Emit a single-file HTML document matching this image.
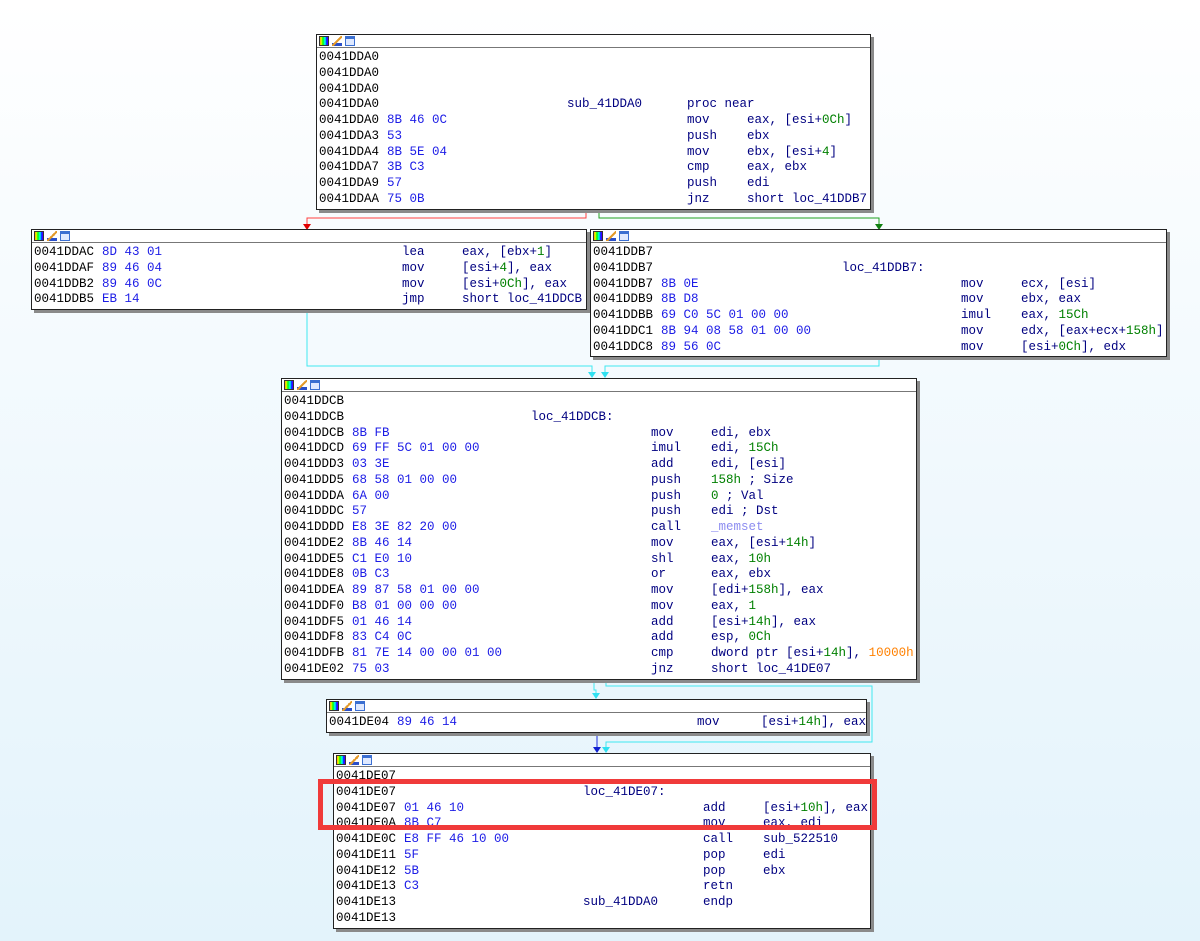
<!DOCTYPE html>
<html><head><meta charset="utf-8"><style>
body{margin:0;width:1200px;height:941px;overflow:hidden;background:linear-gradient(#ffffff 0%,#f6fbfe 30%,#e3f3fb 100%);font-family:"Liberation Mono",monospace;font-size:12.5px;position:relative}
.box{position:absolute;background:#fff;border:1px solid #222;box-shadow:3px 3px 0 #8a8a8a;padding-bottom:1px}
.hd{height:12px;border-bottom:1px solid #777;position:relative;margin-bottom:2px}
.hd i{position:absolute;top:1px;width:10px;height:10px}
.i1{left:2px;background:linear-gradient(90deg,#f00,#ff0,#0f0,#0ff,#00f,#f0f);outline:1px solid #333;outline-offset:-1px}
.i2{left:15px;background:linear-gradient(135deg,transparent 45%,#e39a2a 45%,#e39a2a 60%,transparent 60%),linear-gradient(0deg,#2a4fc9 30%,transparent 30%)}
.i3{left:28px;background:#dfe9ff;outline:1px solid #3b6fd1;outline-offset:-1px;box-shadow:inset 0 3px 0 #3b6fd1}
.l{position:relative;height:15.75px;line-height:15.75px;white-space:pre;color:#000}
.l span{position:absolute;top:0}
.a{left:2px}
.b{left:var(--b);color:#1c1ce6}
.lb{left:var(--l);color:#000080}
.m{left:var(--m);color:#000080}
.o{left:var(--o);color:#000080}
gg{color:#008000}k{color:#8c8cf0}r{color:#ff8000}
svg{position:absolute;left:0;top:0}
</style></head><body>
<svg width="1200" height="941">
<polyline fill="none" points="586,209 586,218 307,218 307,226" stroke="#ff4040"/>
<polyline fill="none" points="599,209 599,218 879,218 879,226" stroke="#20a020"/>
<polyline fill="none" points="307,311 307,366 592,366 592,374" stroke="#40e8f0"/>
<polyline fill="none" points="879,357 879,366 605,366 605,374" stroke="#40e8f0"/>
<polyline fill="none" points="594,680 594,690 596,690 596,696" stroke="#40e8f0"/>
<polyline fill="none" points="606,680 606,686 872,686 872,742 606,742 606,750" stroke="#40e8f0"/>
<polyline fill="none" points="597,735 597,750" stroke="#2030e0"/>
<polygon points="303,224 311,224 307,230" fill="#e00000"/>
<polygon points="875,224 883,224 879,230" fill="#108010"/>
<polygon points="588,372 596,372 592,378" fill="#30e0f0"/>
<polygon points="601,372 609,372 605,378" fill="#30e0f0"/>
<polygon points="592,693 600,693 596,699" fill="#30e0f0"/>
<polygon points="602,747 610,747 606,753" fill="#30e0f0"/>
<polygon points="593,747 601,747 597,753" fill="#1020d0"/>
</svg>

<div class="box" style="left:316px;top:34px;width:553px;--b:70px;--l:250px;--m:370px;--o:430px">
<div class="hd"><i class="i1"></i><i class="i2"></i><i class="i3"></i></div>
<div class="l"><span class="a">0041DDA0</span></div>
<div class="l"><span class="a">0041DDA0</span></div>
<div class="l"><span class="a">0041DDA0</span></div>
<div class="l"><span class="a">0041DDA0</span><span class="lb">sub_41DDA0</span><span class="m">proc near</span></div>
<div class="l"><span class="a">0041DDA0</span><span class="b">8B 46 0C</span><span class="m">mov</span><span class="o">eax, [esi+<gg>0Ch</gg>]</span></div>
<div class="l"><span class="a">0041DDA3</span><span class="b">53</span><span class="m">push</span><span class="o">ebx</span></div>
<div class="l"><span class="a">0041DDA4</span><span class="b">8B 5E 04</span><span class="m">mov</span><span class="o">ebx, [esi+<gg>4</gg>]</span></div>
<div class="l"><span class="a">0041DDA7</span><span class="b">3B C3</span><span class="m">cmp</span><span class="o">eax, ebx</span></div>
<div class="l"><span class="a">0041DDA9</span><span class="b">57</span><span class="m">push</span><span class="o">edi</span></div>
<div class="l"><span class="a">0041DDAA</span><span class="b">75 0B</span><span class="m">jnz</span><span class="o">short loc_41DDB7</span></div>
</div>

<div class="box" style="left:31px;top:229px;width:554px;--b:70px;--m:370px;--o:430px">
<div class="hd"><i class="i1"></i><i class="i2"></i><i class="i3"></i></div>
<div class="l"><span class="a">0041DDAC</span><span class="b">8D 43 01</span><span class="m">lea</span><span class="o">eax, [ebx+<gg>1</gg>]</span></div>
<div class="l"><span class="a">0041DDAF</span><span class="b">89 46 04</span><span class="m">mov</span><span class="o">[esi+<gg>4</gg>], eax</span></div>
<div class="l"><span class="a">0041DDB2</span><span class="b">89 46 0C</span><span class="m">mov</span><span class="o">[esi+<gg>0Ch</gg>], eax</span></div>
<div class="l"><span class="a">0041DDB5</span><span class="b">EB 14</span><span class="m">jmp</span><span class="o">short loc_41DDCB</span></div>
</div>

<div class="box" style="left:590px;top:229px;width:575px;--b:70px;--l:251px;--m:370px;--o:430px">
<div class="hd"><i class="i1"></i><i class="i2"></i><i class="i3"></i></div>
<div class="l"><span class="a">0041DDB7</span></div>
<div class="l"><span class="a">0041DDB7</span><span class="lb">loc_41DDB7:</span></div>
<div class="l"><span class="a">0041DDB7</span><span class="b">8B 0E</span><span class="m">mov</span><span class="o">ecx, [esi]</span></div>
<div class="l"><span class="a">0041DDB9</span><span class="b">8B D8</span><span class="m">mov</span><span class="o">ebx, eax</span></div>
<div class="l"><span class="a">0041DDBB</span><span class="b">69 C0 5C 01 00 00</span><span class="m">imul</span><span class="o">eax, <gg>15Ch</gg></span></div>
<div class="l"><span class="a">0041DDC1</span><span class="b">8B 94 08 58 01 00 00</span><span class="m">mov</span><span class="o">edx, [eax+ecx+<gg>158h</gg>]</span></div>
<div class="l"><span class="a">0041DDC8</span><span class="b">89 56 0C</span><span class="m">mov</span><span class="o">[esi+<gg>0Ch</gg>], edx</span></div>
</div>

<div class="box" style="left:281px;top:378px;width:634px;--b:70px;--l:249px;--m:369px;--o:429px">
<div class="hd"><i class="i1"></i><i class="i2"></i><i class="i3"></i></div>
<div class="l"><span class="a">0041DDCB</span></div>
<div class="l"><span class="a">0041DDCB</span><span class="lb">loc_41DDCB:</span></div>
<div class="l"><span class="a">0041DDCB</span><span class="b">8B FB</span><span class="m">mov</span><span class="o">edi, ebx</span></div>
<div class="l"><span class="a">0041DDCD</span><span class="b">69 FF 5C 01 00 00</span><span class="m">imul</span><span class="o">edi, <gg>15Ch</gg></span></div>
<div class="l"><span class="a">0041DDD3</span><span class="b">03 3E</span><span class="m">add</span><span class="o">edi, [esi]</span></div>
<div class="l"><span class="a">0041DDD5</span><span class="b">68 58 01 00 00</span><span class="m">push</span><span class="o"><gg>158h</gg> ; Size</span></div>
<div class="l"><span class="a">0041DDDA</span><span class="b">6A 00</span><span class="m">push</span><span class="o"><gg>0</gg> ; Val</span></div>
<div class="l"><span class="a">0041DDDC</span><span class="b">57</span><span class="m">push</span><span class="o">edi ; Dst</span></div>
<div class="l"><span class="a">0041DDDD</span><span class="b">E8 3E 82 20 00</span><span class="m">call</span><span class="o"><k>_memset</k></span></div>
<div class="l"><span class="a">0041DDE2</span><span class="b">8B 46 14</span><span class="m">mov</span><span class="o">eax, [esi+<gg>14h</gg>]</span></div>
<div class="l"><span class="a">0041DDE5</span><span class="b">C1 E0 10</span><span class="m">shl</span><span class="o">eax, <gg>10h</gg></span></div>
<div class="l"><span class="a">0041DDE8</span><span class="b">0B C3</span><span class="m">or</span><span class="o">eax, ebx</span></div>
<div class="l"><span class="a">0041DDEA</span><span class="b">89 87 58 01 00 00</span><span class="m">mov</span><span class="o">[edi+<gg>158h</gg>], eax</span></div>
<div class="l"><span class="a">0041DDF0</span><span class="b">B8 01 00 00 00</span><span class="m">mov</span><span class="o">eax, <gg>1</gg></span></div>
<div class="l"><span class="a">0041DDF5</span><span class="b">01 46 14</span><span class="m">add</span><span class="o">[esi+<gg>14h</gg>], eax</span></div>
<div class="l"><span class="a">0041DDF8</span><span class="b">83 C4 0C</span><span class="m">add</span><span class="o">esp, <gg>0Ch</gg></span></div>
<div class="l"><span class="a">0041DDFB</span><span class="b">81 7E 14 00 00 01 00</span><span class="m">cmp</span><span class="o">dword ptr [esi+<gg>14h</gg>], <r>10000h</r></span></div>
<div class="l"><span class="a">0041DE02</span><span class="b">75 03</span><span class="m">jnz</span><span class="o">short loc_41DE07</span></div>
</div>

<div class="box" style="left:326px;top:699px;width:539px;--b:70px;--m:370px;--o:434px">
<div class="hd"><i class="i1"></i><i class="i2"></i><i class="i3"></i></div>
<div class="l"><span class="a">0041DE04</span><span class="b">89 46 14</span><span class="m">mov</span><span class="o">[esi+<gg>14h</gg>], eax</span></div>
</div>

<div class="box" style="left:333px;top:753px;width:536px;--b:70px;--l:249px;--m:369px;--o:429px">
<div class="hd"><i class="i1"></i><i class="i2"></i><i class="i3"></i></div>
<div class="l"><span class="a">0041DE07</span></div>
<div class="l"><span class="a">0041DE07</span><span class="lb">loc_41DE07:</span></div>
<div class="l"><span class="a">0041DE07</span><span class="b">01 46 10</span><span class="m">add</span><span class="o">[esi+<gg>10h</gg>], eax</span></div>
<div class="l"><span class="a">0041DE0A</span><span class="b">8B C7</span><span class="m">mov</span><span class="o">eax, edi</span></div>
<div class="l"><span class="a">0041DE0C</span><span class="b">E8 FF 46 10 00</span><span class="m">call</span><span class="o">sub_522510</span></div>
<div class="l"><span class="a">0041DE11</span><span class="b">5F</span><span class="m">pop</span><span class="o">edi</span></div>
<div class="l"><span class="a">0041DE12</span><span class="b">5B</span><span class="m">pop</span><span class="o">ebx</span></div>
<div class="l"><span class="a">0041DE13</span><span class="b">C3</span><span class="m">retn</span></div>
<div class="l"><span class="a">0041DE13</span><span class="lb">sub_41DDA0</span><span class="m">endp</span></div>
<div class="l"><span class="a">0041DE13</span></div>
</div>

<div style="position:absolute;left:318px;top:779px;width:549px;height:41px;border:5px solid #f03a3a"></div>
</body></html>
